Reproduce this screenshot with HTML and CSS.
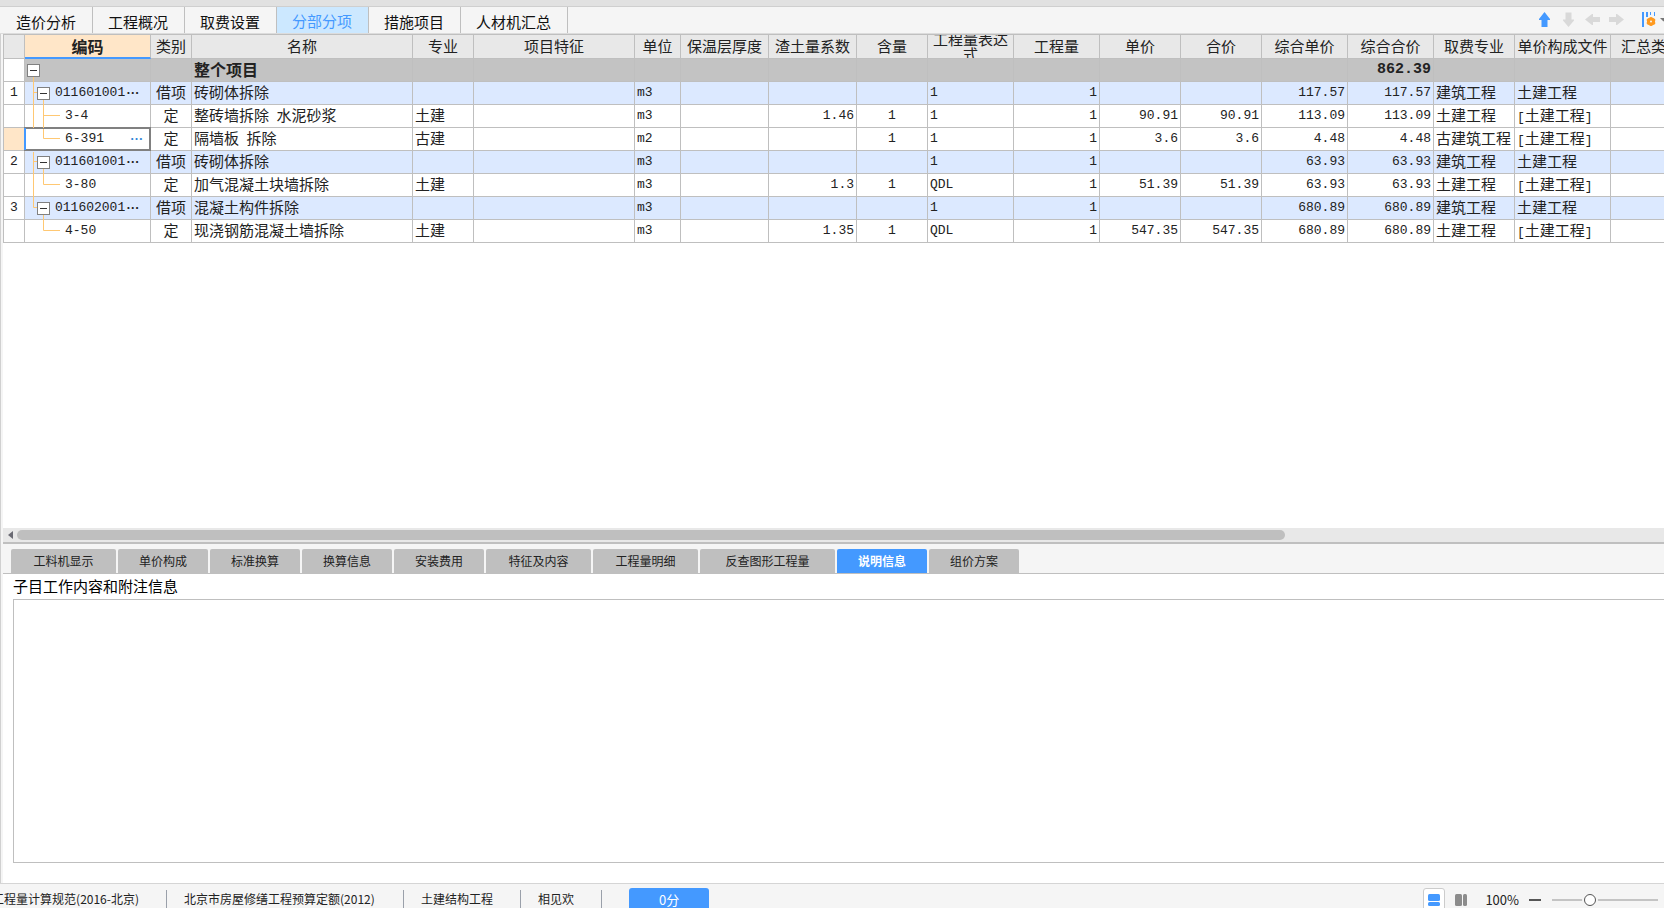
FILE: index.html
```html
<!DOCTYPE html>
<html lang="zh-CN">
<head>
<meta charset="utf-8">
<title>分部分项</title>
<link rel="stylesheet" href="styles.css">
</head>
<body>
<div class="app">
  <header class="topbar">
    <nav class="main-tabs">
      <button class="main-tab">造价分析</button>
      <button class="main-tab">工程概况</button>
      <button class="main-tab">取费设置</button>
      <button class="main-tab active">分部分项</button>
      <button class="main-tab">措施项目</button>
      <button class="main-tab">人材机汇总</button>
    </nav>
    <div class="tools">
      <button class="tool" aria-label="上移"><svg width="15" height="15" viewBox="0 0 15 15"><path d="M7.500 0L13 7V8H10.500V15H4.500V8H2V7Z" fill="#4499ff"/></svg></button>
      <button class="tool" aria-label="下移"><svg width="15" height="15" viewBox="0 0 15 15"><path d="M4.500 0.500H10.500V7.500H13V8.500L7.500 15L2 8.500V7.500H4.500Z" fill="#d9d9d9"/></svg></button>
      <button class="tool" aria-label="左移"><svg width="15" height="15" viewBox="0 0 15 15"><path d="M0 7.500L7 2H8V5H15V10H8V13H7Z" fill="#d9d9d9"/></svg></button>
      <button class="tool" aria-label="右移"><svg width="15" height="15" viewBox="0 0 15 15"><path d="M15 7.500L8 2H7V5H0V10H7V13H8Z" fill="#d9d9d9"/></svg></button>
      <button class="tool settings" aria-label="列设置"><svg width="26" height="15" viewBox="0 0 26 15"><path d="M0 0H2V15H0ZM4 0H6V5H4ZM8 0H9V3H8ZM12 0H13V4H12Z" fill="#4499ff"/><g fill="#ff9a1f"><circle cx="9" cy="9.500" r="4"/><circle cx="9" cy="6.500" r="1.600"/><circle cx="9" cy="12.500" r="1.600"/><circle cx="6.200" cy="8" r="1.600"/><circle cx="11.800" cy="8" r="1.600"/><circle cx="6.200" cy="11" r="1.600"/><circle cx="11.800" cy="11" r="1.600"/></g><circle cx="9" cy="9.500" r="1" fill="#f5f5f5"/><path d="M18 6H25L21.500 9.500Z" fill="#777"/></svg></button>
    </div>
  </header>

  <main class="workspace">
    <section class="grid-pane">
      <table class="grid">
        <colgroup>
          <col class="w21"><col class="w126"><col class="w41"><col class="w221"><col class="w61"><col class="w161"><col class="w46"><col class="w88"><col class="w88"><col class="w71"><col class="w86"><col class="w86"><col class="w81"><col class="w81"><col class="w86"><col class="w86"><col class="w81"><col class="w96"><col class="w81">
        </colgroup>
        <thead>
          <tr><th></th><th class="current">编码</th><th>类别</th><th>名称</th><th>专业</th><th>项目特征</th><th>单位</th><th>保温层厚度</th><th>渣土量系数</th><th>含量</th><th><div class="wrap">工程量表达式</div></th><th>工程量</th><th>单价</th><th>合价</th><th>综合单价</th><th>综合合价</th><th>取费专业</th><th>单价构成文件</th><th>汇总类别</th></tr>
        </thead>
        <tbody>
          <tr class="total"><td></td><td class="code"><div class="node root"><button class="fold trunk" aria-label="折叠"></button></div></td><td></td><td>整个项目</td><td></td><td></td><td></td><td></td><td></td><td></td><td></td><td></td><td></td><td></td><td></td><td class="num">862.39</td><td></td><td></td><td></td></tr>
          <tr class="item"><td class="idx">1</td><td class="code"><div class="node"><svg class="guide" width="12" height="23"><path d="M8.500 0V23M8 10.500H12"/></svg><button class="fold trunk" aria-label="折叠"></button><span class="latin">011601001</span><b class="dots">…</b></div></td><td class="mid">借项</td><td>砖砌体拆除</td><td></td><td></td><td class="latin">m3</td><td></td><td></td><td></td><td class="latin">1</td><td class="num">1</td><td></td><td></td><td class="num">117.57</td><td class="num">117.57</td><td>建筑工程</td><td>土建工程</td><td></td></tr>
          <tr><td></td><td class="code"><div class="node"><svg class="guide" width="40" height="23"><path d="M8.500 0V23M18.500 0V23M18 10.500H35"/></svg><span class="latin">3-4</span></div></td><td class="mid">定</td><td>整砖墙拆除&ensp;水泥砂浆</td><td>土建</td><td></td><td class="latin">m3</td><td></td><td class="num">1.46</td><td class="mid latin">1</td><td class="latin">1</td><td class="num">1</td><td class="num">90.91</td><td class="num">90.91</td><td class="num">113.09</td><td class="num">113.09</td><td>土建工程</td><td><span class="bracket">[</span>土建工程<span class="bracket">]</span></td><td></td></tr>
          <tr class="picked"><td class="idx"></td><td class="code"><div class="node"><svg class="guide" width="40" height="23"><path d="M18.500 1V10.500H35"/></svg><span class="latin">6-391</span><button class="more" aria-label="选择定额">…</button></div></td><td class="mid">定</td><td>隔墙板&ensp;拆除</td><td>古建</td><td></td><td class="latin">m2</td><td></td><td></td><td class="mid latin">1</td><td class="latin">1</td><td class="num">1</td><td class="num">3.6</td><td class="num">3.6</td><td class="num">4.48</td><td class="num">4.48</td><td>古建筑工程</td><td><span class="bracket">[</span>土建工程<span class="bracket">]</span></td><td></td></tr>
          <tr class="item"><td class="idx">2</td><td class="code"><div class="node"><svg class="guide" width="12" height="23"><path d="M8.500 1V23M8 10.500H12"/></svg><button class="fold trunk" aria-label="折叠"></button><span class="latin">011601001</span><b class="dots">…</b></div></td><td class="mid">借项</td><td>砖砌体拆除</td><td></td><td></td><td class="latin">m3</td><td></td><td></td><td></td><td class="latin">1</td><td class="num">1</td><td></td><td></td><td class="num">63.93</td><td class="num">63.93</td><td>建筑工程</td><td>土建工程</td><td></td></tr>
          <tr><td></td><td class="code"><div class="node"><svg class="guide" width="40" height="23"><path d="M8.500 0V23M18.500 0V10.500H35"/></svg><span class="latin">3-80</span></div></td><td class="mid">定</td><td>加气混凝土块墙拆除</td><td>土建</td><td></td><td class="latin">m3</td><td></td><td class="num">1.3</td><td class="mid latin">1</td><td class="latin">QDL</td><td class="num">1</td><td class="num">51.39</td><td class="num">51.39</td><td class="num">63.93</td><td class="num">63.93</td><td>土建工程</td><td><span class="bracket">[</span>土建工程<span class="bracket">]</span></td><td></td></tr>
          <tr class="item"><td class="idx">3</td><td class="code"><div class="node"><svg class="guide" width="12" height="23"><path d="M8.500 0V10.500H12"/></svg><button class="fold trunk" aria-label="折叠"></button><span class="latin">011602001</span><b class="dots">…</b></div></td><td class="mid">借项</td><td>混凝土构件拆除</td><td></td><td></td><td class="latin">m3</td><td></td><td></td><td></td><td class="latin">1</td><td class="num">1</td><td></td><td></td><td class="num">680.89</td><td class="num">680.89</td><td>建筑工程</td><td>土建工程</td><td></td></tr>
          <tr><td></td><td class="code"><div class="node"><svg class="guide" width="40" height="23"><path d="M18.500 0V10.500H35"/></svg><span class="latin">4-50</span></div></td><td class="mid">定</td><td>现浇钢筋混凝土墙拆除</td><td>土建</td><td></td><td class="latin">m3</td><td></td><td class="num">1.35</td><td class="mid latin">1</td><td class="latin">QDL</td><td class="num">1</td><td class="num">547.35</td><td class="num">547.35</td><td class="num">680.89</td><td class="num">680.89</td><td>土建工程</td><td><span class="bracket">[</span>土建工程<span class="bracket">]</span></td><td></td></tr>
        </tbody>
      </table>
    </section>

    <div class="scrollbar">
      <button class="scroll-left" aria-label="向左滚动"><svg width="5" height="8" viewBox="0 0 5 8"><path d="M5 0V8L0 4Z" fill="#6b6b74"/></svg></button>
      <div class="scroll-track"><div class="scroll-thumb"></div></div>
    </div>

    <nav class="detail-tabs">
      <button class="detail-tab five">工料机显示</button>
      <button class="detail-tab">单价构成</button>
      <button class="detail-tab">标准换算</button>
      <button class="detail-tab">换算信息</button>
      <button class="detail-tab">安装费用</button>
      <button class="detail-tab five">特征及内容</button>
      <button class="detail-tab five">工程量明细</button>
      <button class="detail-tab seven">反查图形工程量</button>
      <button class="detail-tab active">说明信息</button>
      <button class="detail-tab">组价方案</button>
    </nav>

    <section class="notes">
      <label class="notes-label" for="notes">子目工作内容和附注信息</label>
      <textarea class="notes-box" id="notes"></textarea>
    </section>
  </main>

  <footer class="status">
    <div class="status-item spec">工程量计算规范(2016-北京)</div>
    <div class="status-item quota">北京市房屋修缮工程预算定额(2012)</div>
    <div class="status-item">土建结构工程</div>
    <div class="status-item">相见欢</div>
    <button class="score">0分</button>
    <div class="view-tools">
      <button class="view on" aria-label="上下布局"><svg width="12" height="12" viewBox="0 0 12 12" fill="#4499ff"><rect width="12" height="7" rx="1.500"/><rect y="8" width="12" height="4" rx="1.500"/></svg></button>
      <button class="view" aria-label="左右布局"><svg width="12" height="12" viewBox="0 0 12 12" fill="#8c8c8c"><rect width="7" height="12" rx="1.500"/><rect x="8" width="4" height="12" rx="1.500"/></svg></button>
      <label class="zoom-value" for="zoom">100%</label>
      <button class="zoom-out" aria-label="缩小"><svg width="12" height="2"><rect width="12" height="2" fill="#555"/></svg></button>
      <input class="zoom" id="zoom" type="range" min="0" max="100" value="34">
    </div>
  </footer>
</div>
</body>
</html>
```

FILE: styles.css
```css
* { box-sizing: border-box; }

body {
  margin: 0;
  font-family: "Noto Sans CJK SC", sans-serif;
  font-size: 15px;
  color: #222;
  background: #f5f5f5;
}

button {
  margin: 0;
  padding: 0;
  border: 0;
  background: none;
  font: inherit;
  color: inherit;
}

svg { display: block; }

.app {
  display: flex;
  flex-direction: column;
  height: 100vh;
  overflow: hidden;
}

/* top tab bar */
.topbar {
  flex: none;
  display: flex;
  justify-content: space-between;
  height: 34px;
  padding-left: 1px;
  border-top: 6px solid #e1e1e1;
  border-bottom: 1px solid #dcdcdc;
  box-shadow: inset 0 1px #cfcfcf;
}

.main-tabs { display: flex; padding-top: 1px; }

.main-tab {
  padding: 4px 16px 0 15px;
  border-right: 1px solid #bfbfbf;
  line-height: 22px;
  color: #111;
  white-space: nowrap;
}

.main-tab.active {
  padding-top: 2px;
  background: #cce8ff;
  color: #4499ff;
}

.tools {
  display: flex;
  align-items: center;
  gap: 9px;
  overflow: hidden;
}

.tools .settings { margin-left: 9px; margin-right: -4px; }

/* workspace */
.workspace {
  flex: 1;
  min-height: 0;
  display: flex;
  flex-direction: column;
  padding-left: 3px;
  border-bottom: 1px solid #d5d5d5;
  box-shadow: inset 1px 0 #d0d0d0;
  overflow: hidden;
}

.grid-pane {
  flex: 1;
  min-height: 0;
  overflow: hidden;
  background: #fff;
}

.grid {
  width: max-content;
  table-layout: fixed;
  border-spacing: 0;
  border-top: 1px solid #bfbfbf;
  border-left: 1px solid #bfbfbf;
}

.w21 { width: 21px; }
.w41 { width: 41px; }
.w46 { width: 46px; }
.w61 { width: 61px; }
.w71 { width: 71px; }
.w81 { width: 81px; }
.w86 { width: 86px; }
.w88 { width: 88px; }
.w96 { width: 96px; }
.w126 { width: 126px; }
.w161 { width: 161px; }
.w221 { width: 221px; }

.grid th,
.grid td {
  height: 23px;
  padding: 0 2px 2px;
  border-right: 1px solid #bfbfbf;
  border-bottom: 1px solid #bfbfbf;
  line-height: 20px;
  font-weight: 400;
  white-space: nowrap;
  overflow: hidden;
}

.grid th {
  height: 24px;
  background: #e8e8e8;
}

.grid th.current {
  padding-bottom: 1px;
  background: #ffe6c8;
  border-bottom: 2px solid #4499ff;
  font-size: 16px;
  font-weight: 700;
}

.grid .wrap {
  display: flex;
  align-items: center;
  justify-content: center;
  height: 21px;
  line-height: 15px;
  white-space: normal;
}

.grid .mid { padding: 0 0 2px; text-align: center; }

.grid .idx { padding: 0; text-align: center; }

.grid .latin,
.grid .num,
.grid .idx {
  font-family: "Liberation Mono", "Noto Sans CJK SC", monospace;
  font-size: 13px;
}

.grid td.latin,
.grid .num,
.grid .idx {
  padding-bottom: 0;
  line-height: 22px;
}

.grid .num { text-align: right; }

.bracket {
  font-family: "Liberation Mono", monospace;
  font-size: 13px;
  line-height: 1;
}

.item td { background: #dce9ff; }
.grid .item .idx { background: #fff; }

.grid .total td {
  background: #c3c3c3;
  font-size: 16px;
  font-weight: 700;
}

.grid .total td:first-child { background: #fff; }
.grid .total .num { font-size: 15px; }
.picked .idx { background: #ffe6c8; }

.grid .code { padding: 0; overflow: visible; }

.node {
  display: flex;
  align-items: center;
  height: 22px;
}

.node .latin { line-height: 22px; }

.node.root { padding-left: 2px; }

.guide {
  align-self: flex-start;
  flex: none;
  overflow: visible;
  fill: none;
  stroke: #ffc873;
}

.fold {
  position: relative;
  flex: none;
  width: 13px;
  height: 13px;
  margin-right: 5px;
  border: 1px solid #808080;
  background: linear-gradient(#333, #333) center / 7px 1px no-repeat #fff;
}

.trunk::after {
  content: "";
  position: absolute;
  top: 12px;
  left: 5px;
  width: 1px;
  height: 6px;
  background: #ffc873;
}

.dots { margin-left: 1px; font-size: 13px; }

.picked .node {
  box-shadow: inset 1px 0 #4499ff, -1px 0 #4499ff, 0 0 0 1px #808080, inset 0 0 0 1px #808080;
}

.more {
  margin-left: auto;
  margin-right: 7px;
  font-size: 13px;
  font-weight: 700;
  color: #2f84d6;
}

/* horizontal scrollbar */
.scrollbar {
  flex: none;
  display: flex;
  align-items: center;
  gap: 4px;
  height: 16px;
  padding-left: 5px;
  border-bottom: 2px solid #bfbfbf;
  background: #e8e8e8;
}

.scroll-track { flex: 1; }

.scroll-thumb {
  width: 77%;
  height: 10px;
  border-radius: 5px;
  background: #bfbfbf;
}

/* detail tabs */
.detail-tabs {
  flex: none;
  display: flex;
  gap: 2px;
  padding: 5px 0 0 8px;
  border-bottom: 1px solid #bfbfbf;
}

.detail-tab {
  width: 90px;
  height: 24px;
  border-radius: 2px 2px 0 0;
  background: #bfbfbf;
  font-size: 12px;
  line-height: 24px;
}

.detail-tab.five { width: 105px; }
.detail-tab.seven { width: 135px; }

.detail-tab.active {
  background: #4499ff;
  color: #fff;
  font-weight: 700;
}

/* notes */
.notes {
  flex: none;
  display: flex;
  flex-direction: column;
  padding: 0 0 20px 10px;
  background: #fff;
}

.notes-label {
  padding-bottom: 2px;
  line-height: 23px;
  color: #000;
}

.notes-box {
  height: 264px;
  margin-right: -1px;
  border: 1px solid #bfbfbf;
  resize: none;
  outline: 0;
  font: inherit;
}

/* status bar */
.status {
  flex: none;
  display: flex;
  height: 24px;
  overflow: hidden;
  font-size: 12px;
  line-height: 18px;
  white-space: nowrap;
}

.status-item {
  flex: none;
  height: 20px;
  margin-top: 6px;
  padding: 0 27px 0 17px;
  border-right: 1px solid #9aa0aa;
}

.status-item.spec {
  display: flex;
  justify-content: flex-end;
  width: 167px;
  padding-left: 0;
  overflow: hidden;
}

.status-item.quota { width: 237px; }

.score {
  flex: none;
  width: 80px;
  height: 24px;
  margin: 4px 0 0 27px;
  border-radius: 3px;
  background: #4499ff;
  color: #fff;
  font-size: 13px;
  line-height: 22px;
}

.view-tools {
  display: flex;
  align-items: center;
  height: 24px;
  margin: 4px 6px 0 auto;
}

.view {
  display: flex;
  align-items: center;
  justify-content: center;
  width: 22px;
  height: 24px;
  margin-right: 5px;
  border-radius: 3px;
}

.view.on { border: 1px solid #ccc; background: #fff; }

.zoom-value {
  margin: 0 10px 0 8px;
  font-size: 13px;
}

.zoom {
  appearance: none;
  width: 106px;
  height: 16px;
  margin: 0 0 0 11px;
  background: linear-gradient(#c4c4c4, #c4c4c4) center / 100% 2px no-repeat;
}

.zoom::-webkit-slider-thumb {
  appearance: none;
  width: 12px;
  height: 12px;
  border: 1px solid #555;
  border-radius: 50%;
  background: #fff;
  box-shadow: 0 0 0 2px #f5f5f5;
}
```
